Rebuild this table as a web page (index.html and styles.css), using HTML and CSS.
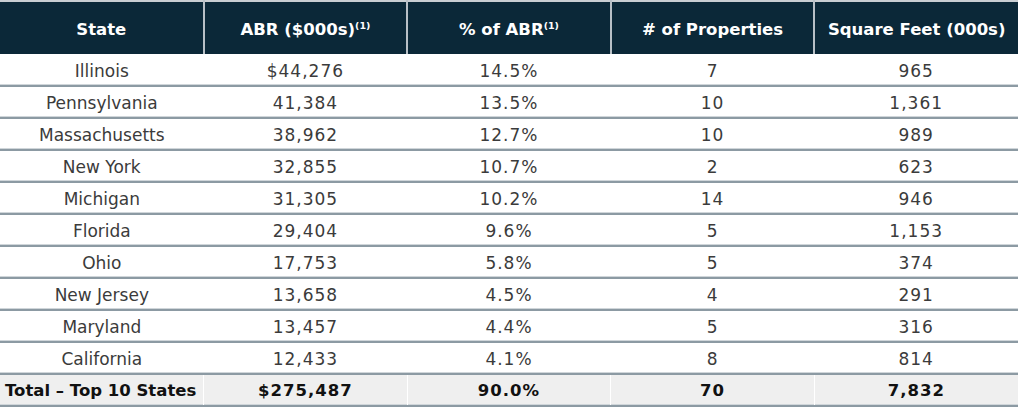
FILE: index.html
```html
<!DOCTYPE html>
<html>
<head>
<meta charset="utf-8">
<link rel="stylesheet" href="styles.css">
</head>
<body>
<table class="tbl">
  <thead>
    <tr>
      <th>State</th>
      <th>ABR ($000s)<sup>(1)</sup></th>
      <th>% of ABR<sup>(1)</sup></th>
      <th># of Properties</th>
      <th>Square Feet (000s)</th>
    </tr>
  </thead>
  <tbody>
    <tr><td>Illinois</td><td>$44,276</td><td>14.5%</td><td>7</td><td>965</td></tr>
    <tr><td>Pennsylvania</td><td>41,384</td><td>13.5%</td><td>10</td><td>1,361</td></tr>
    <tr><td>Massachusetts</td><td>38,962</td><td>12.7%</td><td>10</td><td>989</td></tr>
    <tr><td>New York</td><td>32,855</td><td>10.7%</td><td>2</td><td>623</td></tr>
    <tr><td>Michigan</td><td>31,305</td><td>10.2%</td><td>14</td><td>946</td></tr>
    <tr><td>Florida</td><td>29,404</td><td>9.6%</td><td>5</td><td>1,153</td></tr>
    <tr><td>Ohio</td><td>17,753</td><td>5.8%</td><td>5</td><td>374</td></tr>
    <tr><td>New Jersey</td><td>13,658</td><td>4.5%</td><td>4</td><td>291</td></tr>
    <tr><td>Maryland</td><td>13,457</td><td>4.4%</td><td>5</td><td>316</td></tr>
    <tr><td>California</td><td>12,433</td><td>4.1%</td><td>8</td><td>814</td></tr>
    <tr class="total"><td class="first">Total – Top 10 States</td><td>$275,487</td><td>90.0%</td><td>70</td><td>7,832</td></tr>
  </tbody>
</table>
</body>
</html>
```

FILE: styles.css
```css
html, body {
  margin: 0;
  padding: 0;
  background: #ffffff;
}
.tbl {
  width: 1018px;
  border-collapse: collapse;
  table-layout: fixed;
  font-family: "DejaVu Sans", "Open Sans", sans-serif;
  border-top: 2px solid #c9ced2;
}
.tbl th {
  background: #0b2838;
  color: #ffffff;
  font-weight: 700;
  font-size: 16.5px;
  height: 50px;
  padding: 2px 0 0 0;
  text-align: center;
  vertical-align: middle;
  border-left: 2px solid #b8c0c6;
}
.tbl th:first-child {
  border-left: none;
}
.tbl sup {
  font-size: 9.5px;
  vertical-align: 6px;
  line-height: 0;
}
.tbl td {
  font-size: 17px;
  color: #3b3b3b;
  text-align: center;
  vertical-align: middle;
  padding: 2px 0 0 0;
  height: 28px;
  line-height: 24px;
  letter-spacing: 1px;
  border-bottom: 2px solid #8c9aa3;
  box-shadow: inset 0 -1px 0 #d0d6da;
}
.tbl td:first-child {
  letter-spacing: 0;
}
.tbl tbody tr:first-child td {
  height: 29px;
}
.tbl .total td {
  background: #efefef;
  color: #111111;
  font-weight: 700;
  font-size: 16.5px;
  border-left: 1px solid #ffffff;
}
.tbl .total td.first {
  text-align: left;
  padding-left: 5px;
  border-left: none;
}
```
